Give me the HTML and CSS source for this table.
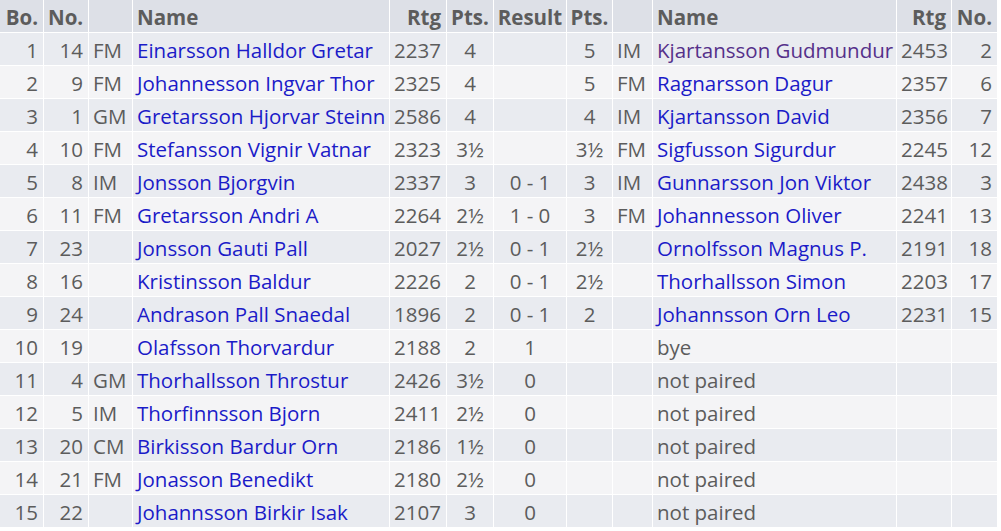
FILE: index.html
```html
<!DOCTYPE html>
<html>
<head>
<meta charset="utf-8">
<link rel="stylesheet" href="styles.css">
</head>
<body>
<table class="pairings">
<colgroup>
<col class="c-bo"><col class="c-no"><col class="c-ti"><col class="c-name"><col class="c-rtg"><col class="c-pts"><col class="c-res"><col class="c-pts2"><col class="c-ti2"><col class="c-name2"><col class="c-rtg2"><col class="c-no2">
</colgroup>
<thead>
<tr><th class="r">Bo.</th><th class="r">No.</th><th></th><th class="l">Name</th><th class="r">Rtg</th><th class="c">Pts.</th><th class="c">Result</th><th class="c">Pts.</th><th></th><th class="l">Name</th><th class="r">Rtg</th><th class="r">No.</th></tr>
</thead>
<tbody>
<tr><td class="r">1</td><td class="r">14</td><td class="t">FM</td><td class="n"><a href="#">Einarsson Halldor Gretar</a></td><td class="r">2237</td><td class="c">4</td><td class="c"></td><td class="c">5</td><td class="t">IM</td><td class="n"><a href="#" class="visited">Kjartansson Gudmundur</a></td><td class="r">2453</td><td class="r">2</td></tr>
<tr><td class="r">2</td><td class="r">9</td><td class="t">FM</td><td class="n"><a href="#">Johannesson Ingvar Thor</a></td><td class="r">2325</td><td class="c">4</td><td class="c"></td><td class="c">5</td><td class="t">FM</td><td class="n"><a href="#">Ragnarsson Dagur</a></td><td class="r">2357</td><td class="r">6</td></tr>
<tr><td class="r">3</td><td class="r">1</td><td class="t">GM</td><td class="n"><a href="#">Gretarsson Hjorvar Steinn</a></td><td class="r">2586</td><td class="c">4</td><td class="c"></td><td class="c">4</td><td class="t">IM</td><td class="n"><a href="#">Kjartansson David</a></td><td class="r">2356</td><td class="r">7</td></tr>
<tr><td class="r">4</td><td class="r">10</td><td class="t">FM</td><td class="n"><a href="#">Stefansson Vignir Vatnar</a></td><td class="r">2323</td><td class="c">3½</td><td class="c"></td><td class="c">3½</td><td class="t">FM</td><td class="n"><a href="#">Sigfusson Sigurdur</a></td><td class="r">2245</td><td class="r">12</td></tr>
<tr><td class="r">5</td><td class="r">8</td><td class="t">IM</td><td class="n"><a href="#">Jonsson Bjorgvin</a></td><td class="r">2337</td><td class="c">3</td><td class="c">0 - 1</td><td class="c">3</td><td class="t">IM</td><td class="n"><a href="#">Gunnarsson Jon Viktor</a></td><td class="r">2438</td><td class="r">3</td></tr>
<tr><td class="r">6</td><td class="r">11</td><td class="t">FM</td><td class="n"><a href="#">Gretarsson Andri A</a></td><td class="r">2264</td><td class="c">2½</td><td class="c">1 - 0</td><td class="c">3</td><td class="t">FM</td><td class="n"><a href="#">Johannesson Oliver</a></td><td class="r">2241</td><td class="r">13</td></tr>
<tr><td class="r">7</td><td class="r">23</td><td class="t"></td><td class="n"><a href="#">Jonsson Gauti Pall</a></td><td class="r">2027</td><td class="c">2½</td><td class="c">0 - 1</td><td class="c">2½</td><td class="t"></td><td class="n"><a href="#">Ornolfsson Magnus P.</a></td><td class="r">2191</td><td class="r">18</td></tr>
<tr><td class="r">8</td><td class="r">16</td><td class="t"></td><td class="n"><a href="#">Kristinsson Baldur</a></td><td class="r">2226</td><td class="c">2</td><td class="c">0 - 1</td><td class="c">2½</td><td class="t"></td><td class="n"><a href="#">Thorhallsson Simon</a></td><td class="r">2203</td><td class="r">17</td></tr>
<tr><td class="r">9</td><td class="r">24</td><td class="t"></td><td class="n"><a href="#">Andrason Pall Snaedal</a></td><td class="r">1896</td><td class="c">2</td><td class="c">0 - 1</td><td class="c">2</td><td class="t"></td><td class="n"><a href="#">Johannsson Orn Leo</a></td><td class="r">2231</td><td class="r">15</td></tr>
<tr><td class="r">10</td><td class="r">19</td><td class="t"></td><td class="n"><a href="#">Olafsson Thorvardur</a></td><td class="r">2188</td><td class="c">2</td><td class="c">1</td><td class="c"></td><td class="t"></td><td class="n">bye</td><td class="r"></td><td class="r"></td></tr>
<tr><td class="r">11</td><td class="r">4</td><td class="t">GM</td><td class="n"><a href="#">Thorhallsson Throstur</a></td><td class="r">2426</td><td class="c">3½</td><td class="c">0</td><td class="c"></td><td class="t"></td><td class="n">not paired</td><td class="r"></td><td class="r"></td></tr>
<tr><td class="r">12</td><td class="r">5</td><td class="t">IM</td><td class="n"><a href="#">Thorfinnsson Bjorn</a></td><td class="r">2411</td><td class="c">2½</td><td class="c">0</td><td class="c"></td><td class="t"></td><td class="n">not paired</td><td class="r"></td><td class="r"></td></tr>
<tr><td class="r">13</td><td class="r">20</td><td class="t">CM</td><td class="n"><a href="#">Birkisson Bardur Orn</a></td><td class="r">2186</td><td class="c">1½</td><td class="c">0</td><td class="c"></td><td class="t"></td><td class="n">not paired</td><td class="r"></td><td class="r"></td></tr>
<tr><td class="r">14</td><td class="r">21</td><td class="t">FM</td><td class="n"><a href="#">Jonasson Benedikt</a></td><td class="r">2180</td><td class="c">2½</td><td class="c">0</td><td class="c"></td><td class="t"></td><td class="n">not paired</td><td class="r"></td><td class="r"></td></tr>
<tr><td class="r">15</td><td class="r">22</td><td class="t"></td><td class="n"><a href="#">Johannsson Birkir Isak</a></td><td class="r">2107</td><td class="c">3</td><td class="c">0</td><td class="c"></td><td class="t"></td><td class="n">not paired</td><td class="r"></td><td class="r"></td></tr>
</tbody>
</table>
</body>
</html>
```
FILE: styles.css
```css
html, body {
  margin: 0;
  padding: 0;
  background: #ffffff;
}

.pairings {
  font-family: "Open Sans", "Noto Sans", sans-serif;
  font-size: 20.5px;
  color: #5c5c5c;
  width: 997px;
  table-layout: fixed;
  border-collapse: separate;
  border-spacing: 0;
}

.c-bo { width: 43px; }
.c-no { width: 45px; }
.c-ti { width: 44px; }
.c-name { width: 257px; }
.c-rtg { width: 57px; }
.c-pts { width: 47px; }
.c-res { width: 73px; }
.c-pts2 { width: 46px; }
.c-ti2 { width: 40px; }
.c-name2 { width: 244px; }
.c-rtg2 { width: 55px; }
.c-no2 { width: 46px; }

.pairings th,
.pairings td {
  height: 33px;
  padding: 3px 5px 0 4px;
  white-space: nowrap;
  overflow: hidden;
  box-sizing: border-box;
  line-height: 29px;
  vertical-align: middle;
}

.pairings th + th,
.pairings td + td {
  border-left: 1px solid #ffffff;
}

.pairings th {
  height: 32px;
  padding-top: 2px;
  line-height: 30px;
  background: #dde0e7;
  font-weight: bold;
}

.pairings tbody td {
  border-top: 1px solid #ffffff;
}

.pairings tbody tr:nth-child(odd) td { background: #e9ebf0; }
.pairings tbody tr:nth-child(even) td { background: #f4f4f6; }

.r { text-align: right; }
.l { text-align: left; }
.c { text-align: center; }
.pairings .c { padding-left: 0; padding-right: 0; }
.t { text-align: left; }
.n { text-align: left; }

.pairings a {
  color: #1b1bc8;
  text-decoration: none;
}

.pairings a.visited {
  color: #55308a;
}
```
